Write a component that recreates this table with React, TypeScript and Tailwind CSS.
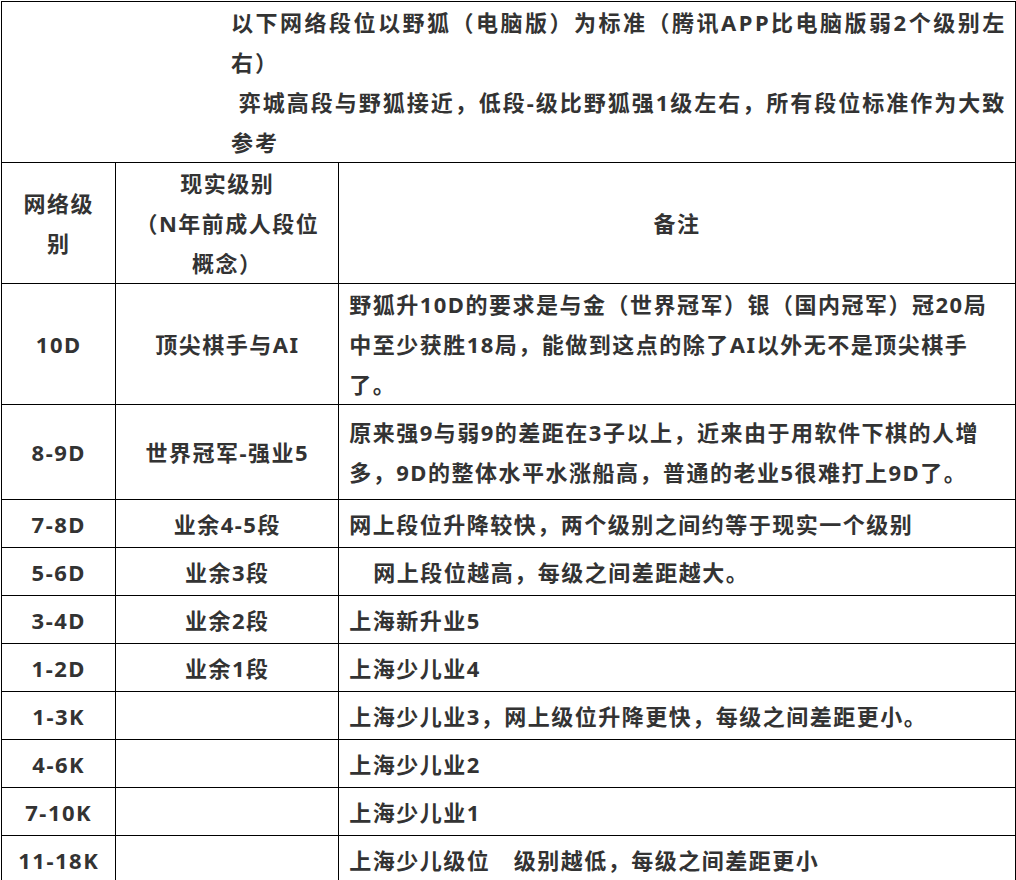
import React from "react";

const font = {
  fontFamily: '"Noto Sans", "Noto Sans CJK SC", sans-serif',
};

type Row = { lvl: string; real: string; note: React.ReactNode; h: string };

const rows: Row[] = [
  {
    lvl: "10D",
    real: "顶尖棋手与AI",
    note: (
      <>
        野狐升10D的要求是与金（世界冠军）银（国内冠军）冠20局
        <br />
        中至少获胜18局，能做到这点的除了AI以外无不是顶尖棋手
        <br />
        了。
      </>
    ),
    h: "h-[121px]",
  },
  {
    lvl: "8-9D",
    real: "世界冠军-强业5",
    note: (
      <>
        原来强9与弱9的差距在3子以上，近来由于用软件下棋的人增
        <br />
        多，9D的整体水平水涨船高，普通的老业5很难打上9D了。
      </>
    ),
    h: "h-[95px]",
  },
  { lvl: "7-8D", real: "业余4-5段", note: "网上段位升降较快，两个级别之间约等于现实一个级别", h: "h-[48px]" },
  {
    lvl: "5-6D",
    real: "业余3段",
    note: <span className="pl-[24px]">网上段位越高，每级之间差距越大。</span>,
    h: "h-[48px]",
  },
  { lvl: "3-4D", real: "业余2段", note: "上海新升业5", h: "h-[48px]" },
  { lvl: "1-2D", real: "业余1段", note: "上海少儿业4", h: "h-[48px]" },
  { lvl: "1-3K", real: "", note: "上海少儿业3，网上级位升降更快，每级之间差距更小。", h: "h-[48px]" },
  { lvl: "4-6K", real: "", note: "上海少儿业2", h: "h-[48px]" },
  { lvl: "7-10K", real: "", note: "上海少儿业1", h: "h-[48px]" },
  { lvl: "11-18K", real: "", note: "上海少儿级位\u3000级别越低，每级之间差距更小", h: "h-[48px]" },
];

export default function App() {
  return (
    <div className="bg-white min-h-[880px] overflow-hidden" style={font}>
      <table className="border-collapse w-[1015px] ml-[1px] mt-[1px] text-[#333333] font-bold text-[22px] leading-[40px] tracking-[1.5px]">
        <colgroup>
          <col className="w-[115px]" />
          <col className="w-[223px]" />
          <col className="w-[677px]" />
        </colgroup>
        <tbody>
          <tr>
            <td
              colSpan={3}
              className="border border-black h-[161px] align-middle pl-[229px] pr-0 whitespace-nowrap tracking-[2px]"
            >
              <span className="tracking-[2.5px]">以下网络段位以野狐（电脑版）为标准（腾讯APP比电脑版弱2个级别左</span>
              <br />
              右）
              <br />
              {"\u00a0"}弈城高段与野狐接近，低段-级比野狐强1级左右，所有段位标准作为大致
              <br />
              参考
            </td>
          </tr>
          <tr>
            <td className="border border-black h-[121px] text-center align-middle">
              网络级
              <br />
              别
            </td>
            <td className="border border-black text-center align-middle whitespace-nowrap">
              现实级别
              <br />
              （N年前成人段位
              <br />
              概念）
            </td>
            <td className="border border-black text-center align-middle">备注</td>
          </tr>
          {rows.map((r) => (
            <tr key={r.lvl}>
              <td className={`border border-black ${r.h} text-center align-middle`}>{r.lvl}</td>
              <td className="border border-black text-center align-middle whitespace-nowrap">{r.real}</td>
              <td className="border border-black align-middle pl-[10px] whitespace-nowrap">{r.note}</td>
            </tr>
          ))}
        </tbody>
      </table>
    </div>
  );
}
